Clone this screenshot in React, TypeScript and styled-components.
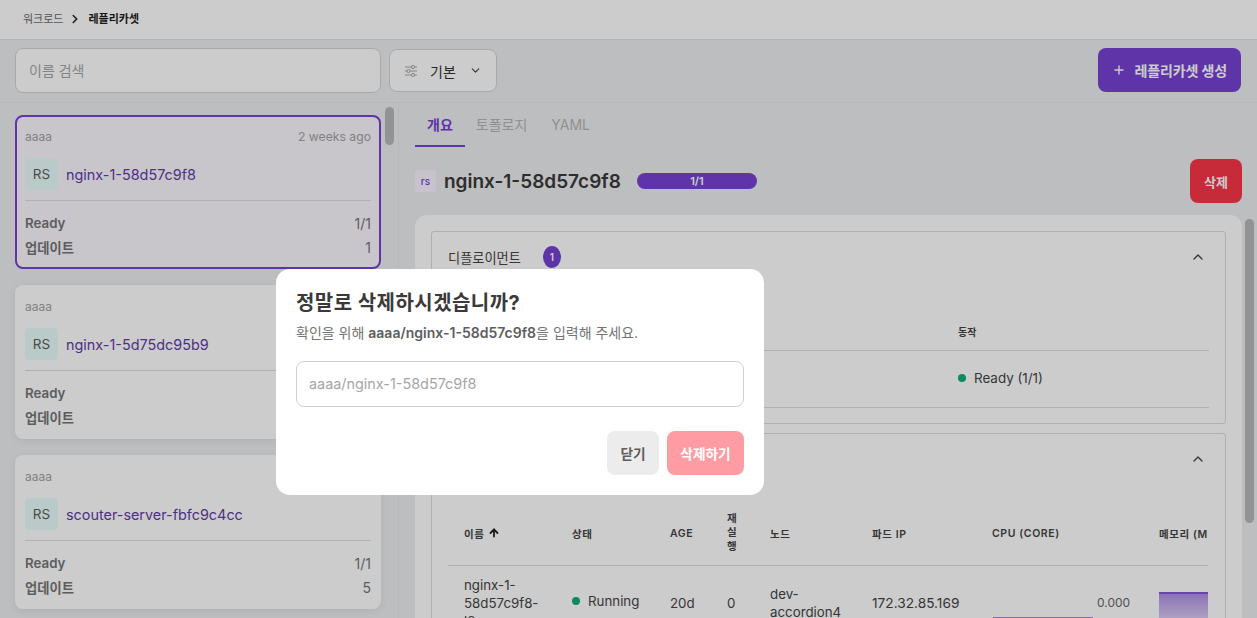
import React from 'react'
import styled, { createGlobalStyle } from 'styled-components'
import { ArrowUp, ChevronDown, ChevronRight, ChevronUp, Plus } from 'lucide-react'

const GlobalStyle = createGlobalStyle`
  html, body {
    margin: 0;
    height: 100%;
    overflow: hidden;
    background: #eceef0;
    font-family: Inter, 'Noto Sans CJK KR', sans-serif;
    color: #3c3c3c;
  }
  * { box-sizing: border-box; }
`

const Page = styled.div`
  position: relative;
  display: flex;
  flex-direction: column;
  height: 618px;
  overflow: hidden;
`

const TopBar = styled.header`
  display: flex;
  align-items: center;
  height: 40px;
  padding: 0 23px 4px;
  background: #fff;
  border-bottom: 1px solid #e3e3e3;
  font-size: 11px;
`

const Crumb = styled.span<{ $current?: boolean }>`
  color: ${(p) => (p.$current ? '#1d1d1d' : '#6a6a6a')};
  font-weight: ${(p) => (p.$current ? 700 : 400)};
`

const CrumbIcon = styled(ChevronRight)`
  width: 14px;
  height: 14px;
  margin: 3px 6px 0 5px;
  color: #222;
  stroke-width: 2.6;
`

const Toolbar = styled.div`
  display: flex;
  align-items: center;
  height: 63px;
  padding: 0 16px 1px 15px;
  border-bottom: 1px solid #e5e7ea;
`

const SearchInput = styled.input`
  width: 366px;
  height: 45px;
  padding: 0 13px;
  border: 1px solid #d4d4d4;
  border-radius: 8px;
  background: #fff;
  font: 14px Inter, 'Noto Sans CJK KR', sans-serif;
  outline: none;
  &::placeholder { color: #a6a6a6; }
`

const FilterButton = styled.div`
  display: flex;
  align-items: center;
  width: 108px;
  height: 43px;
  margin-left: 8px;
  padding: 0 14px;
  border: 1px solid #d4d4d4;
  border-radius: 8px;
  background: #fff;
  font-size: 14px;
  color: #333;
`

const FilterIcon = styled.svg`
  flex: none;
  width: 14px;
  height: 14px;
  color: #a8a8a8;
`

const FilterLabel = styled.span`
  margin-left: 12px;
  flex: 1;
`

const FilterChevron = styled(ChevronDown)`
  width: 13px;
  height: 13px;
  color: #444;
`

const CreateButton = styled.button`
  display: flex;
  align-items: center;
  gap: 8px;
  height: 44px;
  margin: 0 0 1px auto;
  padding: 0 14px;
  border: none;
  border-radius: 8px;
  background: #7642d2;
  color: #fff;
  font: 600 14px Inter, 'Noto Sans CJK KR', sans-serif;
  letter-spacing: -0.14px;
`

const Body = styled.div`
  display: flex;
  flex: 1;
  min-height: 0;
`

const Sidebar = styled.aside`
  position: relative;
  display: flex;
  flex-direction: column;
  gap: 16px;
  width: 399px;
  flex: none;
  padding: 12px 0 0 15px;
  border-right: 1px solid #e5e7ea;
  overflow: hidden;
`

const ScrollThumb = styled.div<{ $top: number; $height: number; $left: number }>`
  position: absolute;
  top: ${(p) => p.$top}px;
  left: ${(p) => p.$left}px;
  width: 9px;
  height: ${(p) => p.$height}px;
  border-radius: 5px;
  background: #b8b8bc;
`

const Card = styled.article<{ $selected?: boolean }>`
  flex: none;
  width: 366px;
  height: 154px;
  padding: ${(p) => (p.$selected ? '10px 8px 8px' : '12px 10px 10px')};
  border: ${(p) => (p.$selected ? '2px solid #7642d2' : 'none')};
  border-radius: 8px;
  background: ${(p) => (p.$selected ? '#faf7fe' : '#fff')};
  box-shadow: ${(p) => (p.$selected ? 'none' : '0 2px 8px rgba(0, 0, 0, 0.07)')};
`

const CardMeta = styled.div`
  display: flex;
  justify-content: space-between;
  align-items: center;
  height: 18px;
`

const Namespace = styled.span`
  font-size: 12px;
  color: #a3a3a3;
`

const Age = styled.span`
  font-size: 12.2px;
  color: #a3a3a3;
`

const CardName = styled.div`
  display: flex;
  align-items: center;
  gap: 8px;
  margin-top: 13px;
  padding-bottom: 10px;
  border-bottom: 1px solid #dedede;
  color: #633ca8;
  font-size: 14.4px;
`

const Avatar = styled.span`
  display: flex;
  align-items: center;
  justify-content: center;
  width: 33px;
  height: 32px;
  border-radius: 4px;
  background: #e9fdfb;
  color: #5e5e5e;
  font-size: 13.5px;
`

const StatRows = styled.div`
  margin-top: 10px;
`

const StatRow = styled.div`
  display: flex;
  justify-content: space-between;
  align-items: center;
  height: 24px;
`

const StatLabel = styled.span`
  font-size: 13.3px;
  font-weight: 600;
  color: #757575;
`

const StatValue = styled.span`
  font-size: 14px;
  color: #757575;
`

const Main = styled.main`
  position: relative;
  flex: 1;
  min-width: 0;
  padding: 0 15px 0 16px;
  overflow: hidden;
`

const Tabs = styled.nav`
  display: flex;
  height: 44px;
`

const Tab = styled.div<{ $active?: boolean }>`
  display: flex;
  align-items: center;
  margin-right: ${(p) => (p.$active ? -1 : 0)}px;
  padding: 0 12px;
  font-size: 14px;
  font-weight: ${(p) => (p.$active ? 600 : 400)};
  color: ${(p) => (p.$active ? '#7642d2' : '#b5b5b5')};
  border-bottom: 2px solid ${(p) => (p.$active ? '#7642d2' : 'transparent')};
`

const TitleRow = styled.div`
  display: flex;
  align-items: center;
  height: 44px;
  margin-top: 12px;
`

const KindBadge = styled.span`
  display: flex;
  align-items: center;
  justify-content: center;
  width: 21px;
  height: 22px;
  margin-right: 8px;
  border-radius: 3px;
  background: #fbf3ff;
  color: #7642d2;
  font-size: 10px;
  font-weight: 500;
`

const Title = styled.h1`
  margin: 0;
  font-size: 19px;
  font-weight: 600;
  color: #3a3a3a;
`

const ReadyPill = styled.span`
  display: block;
  width: 120px;
  height: 16px;
  margin-left: 16px;
  border-radius: 8px;
  background: #7642d2;
  color: #fff;
  font-size: 11px;
  font-weight: 600;
  line-height: 16px;
  text-align: center;
`

const DeleteButton = styled.button`
  width: 52px;
  height: 44px;
  margin-left: auto;
  border: none;
  border-radius: 8px;
  background: #f93649;
  color: #fff;
  font: 600 13px Inter, 'Noto Sans CJK KR', sans-serif;
`

const Panel = styled.section`
  display: flex;
  flex-direction: column;
  gap: 9px;
  width: 827px;
  height: 420px;
  margin-top: 12px;
  padding: 16px 16px 0;
  border-radius: 12px 12px 0 0;
  background: #fff;
`

const Accordion = styled.div<{ $height: number }>`
  flex: none;
  height: ${(p) => p.$height}px;
  padding: 0 16px;
  border: 1px solid #dcdcdc;
  border-radius: 3px;
  overflow: hidden;
`

const AccordionHead = styled.div`
  display: flex;
  align-items: center;
  height: 51px;
  padding-bottom: 1px;
  font-size: 13.2px;
  color: #444;
`

const CountBadge = styled.span`
  display: flex;
  align-items: center;
  justify-content: center;
  width: 18px;
  height: 22px;
  margin-left: 22px;
  border-radius: 50%;
  background: #7642d2;
  color: #fff;
  font-size: 10px;
  font-weight: 600;
`

const HeadChevron = styled(ChevronUp)`
  width: 16px;
  height: 16px;
  margin-left: auto;
  margin-right: 3px;
  color: #444;
`

const OwnerHead = styled.div`
  display: grid;
  grid-template-columns: 510px 1fr;
  align-items: center;
  height: 38px;
  margin-top: 30px;
  border-bottom: 1px solid #dcdcdc;
  font-size: 10px;
  font-weight: 600;
  color: #444;
`

const OwnerRow = styled.div`
  display: grid;
  grid-template-columns: 510px 1fr;
  align-items: center;
  height: 57px;
  padding-bottom: 3px;
  border-bottom: 1px solid #dcdcdc;
  font-size: 13.4px;
  color: #444;
`

const Status = styled.span`
  display: flex;
  align-items: center;
  gap: 8px;
`

const PodStatus = styled(Status)`
  margin-bottom: 4px;
`

const Dot = styled.i`
  width: 8px;
  height: 8px;
  border-radius: 50%;
  background: #10ae76;
`

const PodGrid = styled.div`
  display: grid;
  grid-template-columns: 108px 98px 57px 43px 102px 120px 167px 65px;
  width: 760px;
  overflow: hidden;
`

const PodHeadCell = styled.div`
  display: flex;
  align-items: center;
  gap: 3px;
  height: 65px;
  margin-top: 16px;
  padding-left: 16px;
  border-bottom: 1px solid #dcdcdc;
  font-size: 10.5px;
  font-weight: 600;
  letter-spacing: 0.6px;
  color: #444;
  white-space: nowrap;
  overflow: hidden;
`

const NarrowHead = styled(PodHeadCell)`
  white-space: normal;
  line-height: 14px;
  padding-right: 15px;
`

const SortIcon = styled(ArrowUp)`
  flex: none;
  width: 12px;
  height: 12px;
  stroke-width: 3.6;
  color: #222;
`

const PodCell = styled.div`
  display: flex;
  align-items: center;
  height: 73px;
  padding: 0 8px 0 16px;
  font-size: 13.3px;
  line-height: 18px;
  color: #444;
`

const IpCell = styled(PodCell)`
  font-size: 13.7px;
`

const CpuCell = styled(PodCell)`
  position: relative;
  padding-left: 121px;
  padding-right: 0;
  font-size: 12px;
  color: #666;
`

const CpuBar = styled.div`
  position: absolute;
  left: 17px;
  top: 51px;
  width: 100px;
  height: 16px;
  border-top: 1px solid #a887e0;
  background: #e5dbf6;
`

const MemoryCell = styled.div`
  height: 73px;
  padding: 26px 0 0 16px;
`

const MemoryChart = styled.svg`
  display: block;
  width: 49px;
  height: 46px;
`

const Backdrop = styled.div`
  position: absolute;
  inset: 0;
  background: rgba(0, 0, 0, 0.2);
`

const Modal = styled.div`
  position: absolute;
  top: 269px;
  left: 276px;
  width: 488px;
  height: 226px;
  padding: 20px;
  border-radius: 14px;
  background: #fff;
`

const ModalTitle = styled.h2`
  margin: 0;
  height: 28px;
  font-size: 20px;
  font-weight: 700;
  line-height: 28px;
  letter-spacing: 0.45px;
  color: #3a3a3a;
`

const ModalHint = styled.p`
  margin: 6px 0 0;
  height: 20px;
  font-size: 14px;
  line-height: 20px;
  color: #757575;
`

const ModalTarget = styled.strong`
  font-weight: 600;
  color: #5e5e5e;
`

const ConfirmInput = styled.input`
  display: block;
  width: 100%;
  height: 46px;
  margin-top: 18px;
  padding: 0 12px 2px;
  border: 1px solid #cfcfcf;
  border-radius: 8px;
  font: 14.4px Inter, 'Noto Sans CJK KR', sans-serif;
  outline: none;
  &::placeholder { color: #a6a6a6; }
`

const ModalActions = styled.div`
  display: flex;
  justify-content: flex-end;
  gap: 8px;
  margin-top: 24px;
`

const ModalButton = styled.button<{ $danger?: boolean }>`
  height: 44px;
  width: ${(p) => (p.$danger ? 77 : 52)}px;
  padding: 0;
  border: none;
  border-radius: 8px;
  background: ${(p) => (p.$danger ? '#ff9ca3' : '#ececec')};
  color: ${(p) => (p.$danger ? '#fff' : '#5e5e5e')};
  font: 600 13.7px Inter, 'Noto Sans CJK KR', sans-serif;
`

const replicaSets = [
  { name: 'nginx-1-58d57c9f8', age: '2 weeks ago', updates: 1, selected: true },
  { name: 'nginx-1-5d75dc95b9', age: '2 weeks ago', updates: 2 },
  { name: 'scouter-server-fbfc9c4cc', age: '2 weeks ago', updates: 5 },
]

export default function App() {
  return (
    <Page>
      <GlobalStyle />
      <TopBar>
        <Crumb>워크로드</Crumb>
        <CrumbIcon />
        <Crumb $current>레플리카셋</Crumb>
      </TopBar>
      <Toolbar>
        <SearchInput placeholder="이름 검색" />
        <FilterButton>
          <FilterIcon viewBox="0 0 14 14" fill="none" stroke="currentColor" strokeWidth="1">
            <path d="M1 3h12M1 7h12M1 11h12" />
            <circle cx="9" cy="3" r="1.6" fill="#fff" />
            <circle cx="4.5" cy="7" r="1.6" fill="#fff" />
            <circle cx="9" cy="11" r="1.6" fill="#fff" />
          </FilterIcon>
          <FilterLabel>기본</FilterLabel>
          <FilterChevron />
        </FilterButton>
        <CreateButton>
          <Plus size={14} strokeWidth={2.4} />
          레플리카셋 생성
        </CreateButton>
      </Toolbar>
      <Body>
        <Sidebar>
          {replicaSets.map((rs) => (
            <Card key={rs.name} $selected={rs.selected}>
              <CardMeta>
                <Namespace>aaaa</Namespace>
                <Age>{rs.age}</Age>
              </CardMeta>
              <CardName>
                <Avatar>RS</Avatar>
                {rs.name}
              </CardName>
              <StatRows>
                <StatRow>
                  <StatLabel>Ready</StatLabel>
                  <StatValue>1/1</StatValue>
                </StatRow>
                <StatRow>
                  <StatLabel>업데이트</StatLabel>
                  <StatValue>{rs.updates}</StatValue>
                </StatRow>
              </StatRows>
            </Card>
          ))}
          <ScrollThumb $top={4} $height={38} $left={385} />
        </Sidebar>
        <Main>
          <Tabs>
            <Tab $active>개요</Tab>
            <Tab>토폴로지</Tab>
            <Tab>YAML</Tab>
          </Tabs>
          <TitleRow>
            <KindBadge>rs</KindBadge>
            <Title>nginx-1-58d57c9f8</Title>
            <ReadyPill>1/1</ReadyPill>
            <DeleteButton>삭제</DeleteButton>
          </TitleRow>
          <Panel>
            <Accordion $height={193}>
              <AccordionHead>
                디플로이먼트
                <CountBadge>1</CountBadge>
                <HeadChevron />
              </AccordionHead>
              <OwnerHead>
                <span>이름</span>
                <span>동작</span>
              </OwnerHead>
              <OwnerRow>
                <span>nginx-1</span>
                <Status>
                  <Dot />
                  Ready (1/1)
                </Status>
              </OwnerRow>
            </Accordion>
            <Accordion $height={300}>
              <AccordionHead>
                파드
                <CountBadge>1</CountBadge>
                <HeadChevron />
              </AccordionHead>
              <PodGrid>
                <PodHeadCell>
                  이름 <SortIcon />
                </PodHeadCell>
                <PodHeadCell>상태</PodHeadCell>
                <PodHeadCell>AGE</PodHeadCell>
                <NarrowHead>재실행</NarrowHead>
                <PodHeadCell>노드</PodHeadCell>
                <PodHeadCell>파드 IP</PodHeadCell>
                <PodHeadCell>CPU (CORE)</PodHeadCell>
                <PodHeadCell>메모리 (MB)</PodHeadCell>
                <PodCell>nginx-1-58d57c9f8-l8</PodCell>
                <PodCell>
                  <PodStatus>
                    <Dot />
                    Running
                  </PodStatus>
                </PodCell>
                <PodCell>20d</PodCell>
                <PodCell>0</PodCell>
                <PodCell>dev-accordion4</PodCell>
                <IpCell>172.32.85.169</IpCell>
                <CpuCell>
                  0.000
                  <CpuBar />
                </CpuCell>
                <MemoryCell>
                  <MemoryChart viewBox="0 0 49 46" preserveAspectRatio="none">
                    <defs>
                      <linearGradient id="memoryFill" x1="0" y1="0" x2="0" y2="1">
                        <stop offset="0" stopColor="#7642d2" stopOpacity="0.6" />
                        <stop offset="1" stopColor="#7642d2" stopOpacity="0.05" />
                      </linearGradient>
                    </defs>
                    <rect width="49" height="46" fill="url(#memoryFill)" />
                    <line x1="0" y1="1" x2="49" y2="1" stroke="#7642d2" strokeWidth="1.5" />
                  </MemoryChart>
                </MemoryCell>
              </PodGrid>
            </Accordion>
          </Panel>
          <ScrollThumb $top={116} $height={304} $left={846} />
        </Main>
      </Body>
      <Backdrop />
      <Modal>
        <ModalTitle>정말로 삭제하시겠습니까?</ModalTitle>
        <ModalHint>
          확인을 위해 <ModalTarget>aaaa/nginx-1-58d57c9f8</ModalTarget>을 입력해 주세요.
        </ModalHint>
        <ConfirmInput placeholder="aaaa/nginx-1-58d57c9f8" />
        <ModalActions>
          <ModalButton>닫기</ModalButton>
          <ModalButton $danger>삭제하기</ModalButton>
        </ModalActions>
      </Modal>
    </Page>
  )
}
